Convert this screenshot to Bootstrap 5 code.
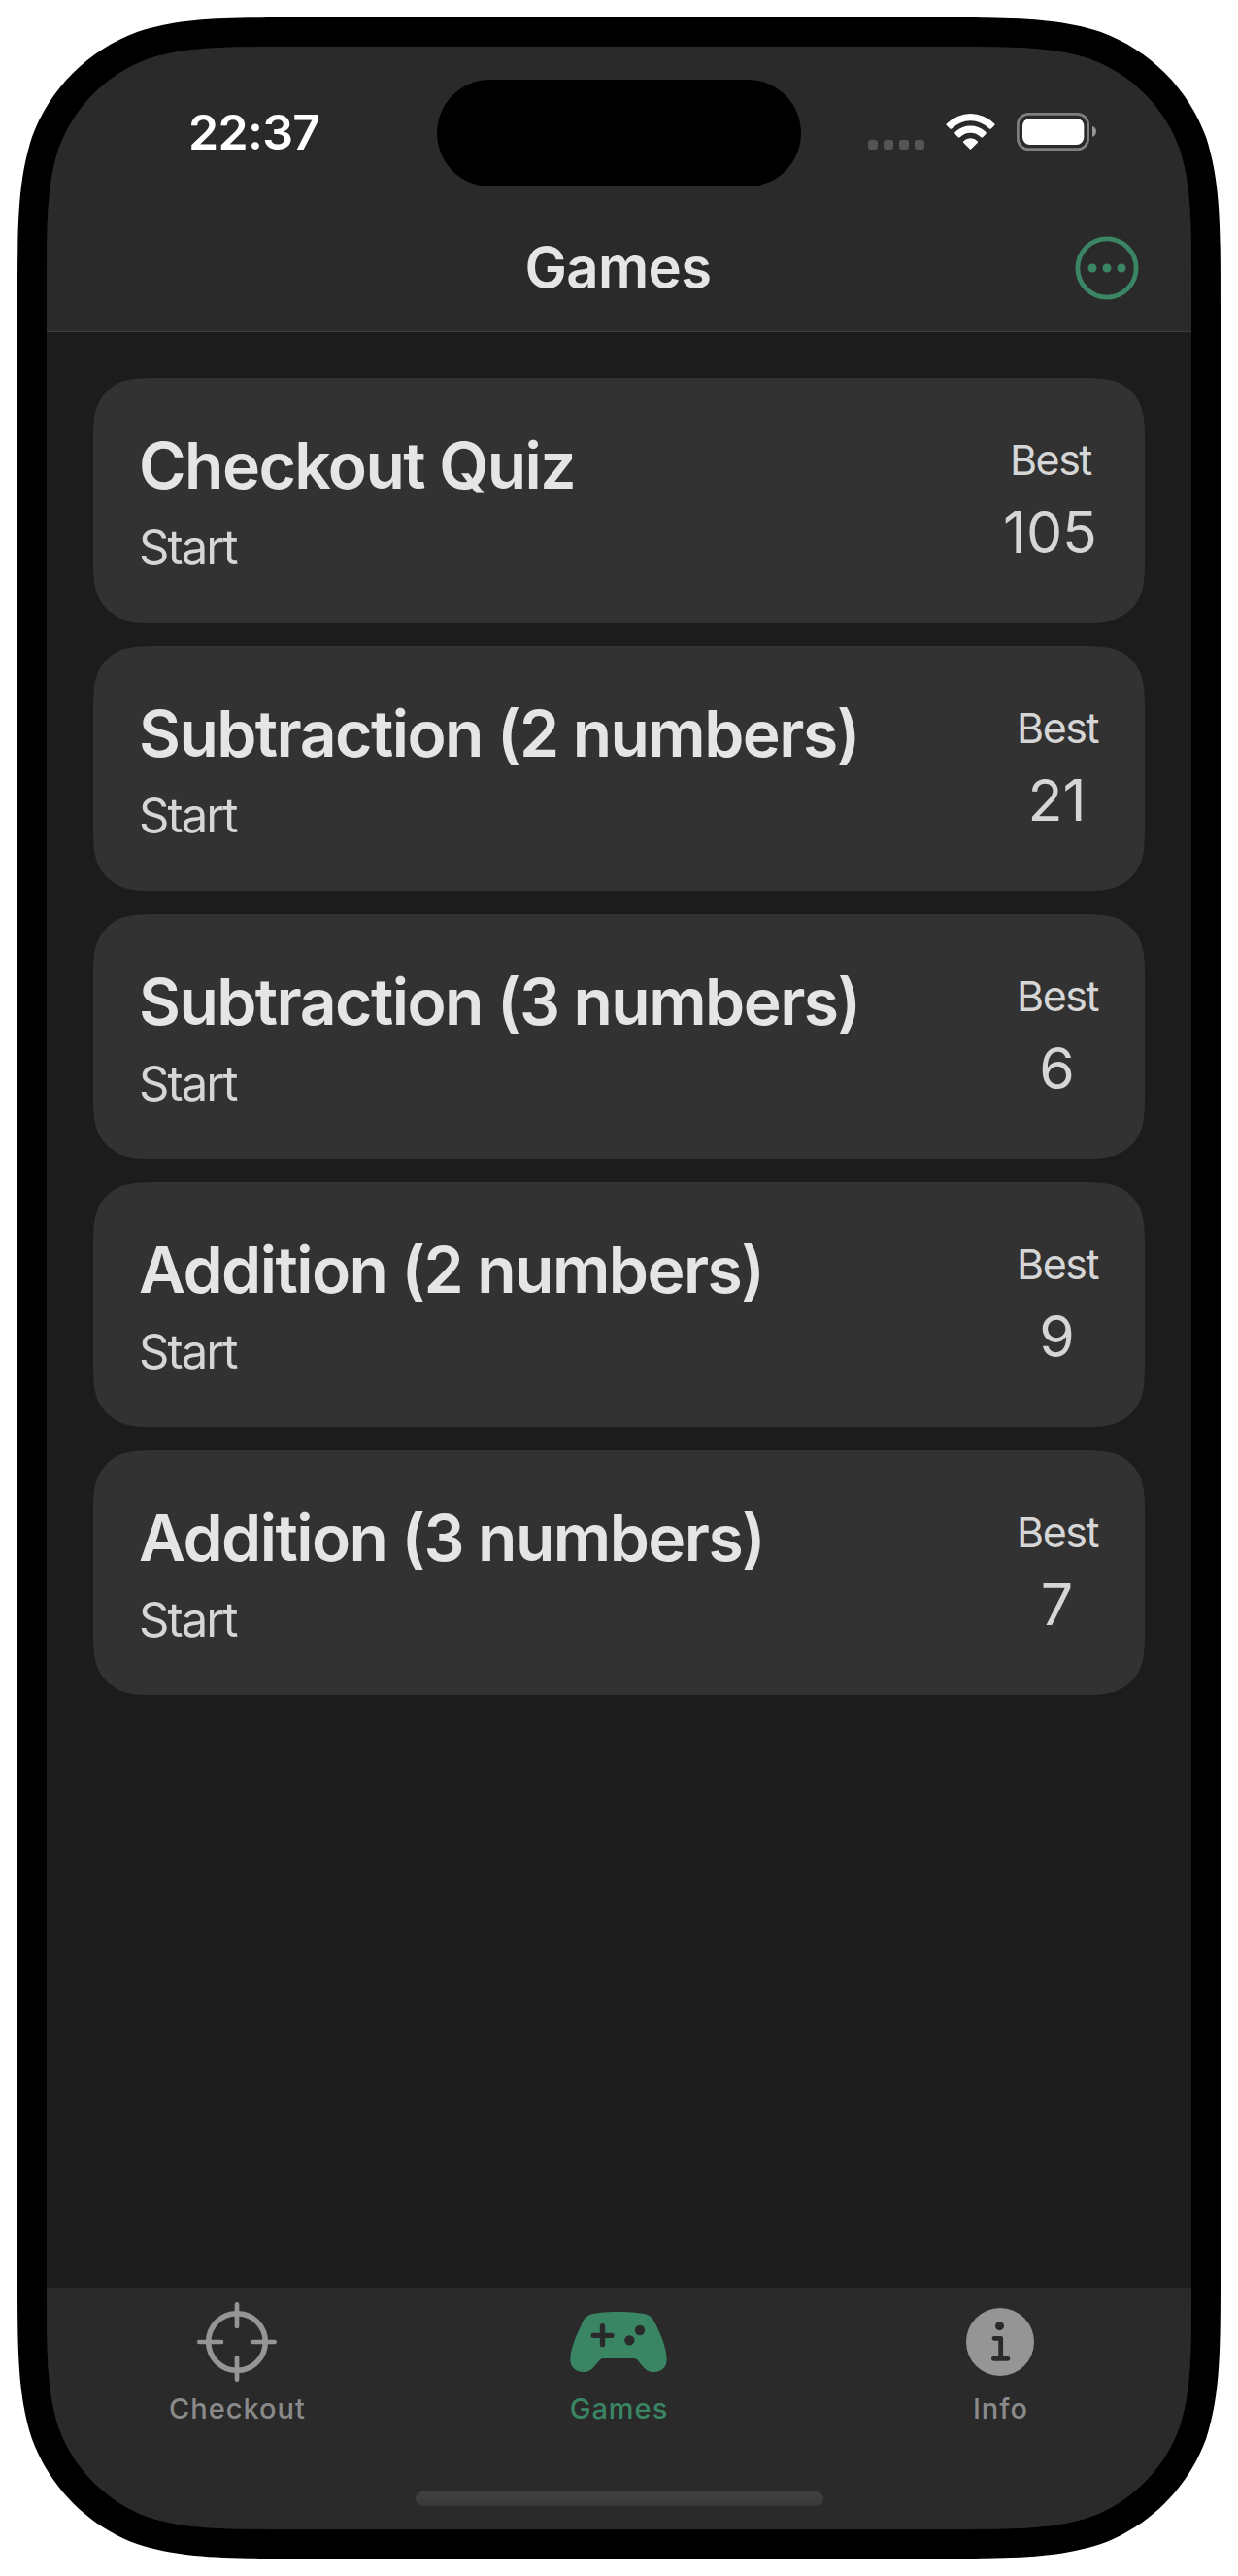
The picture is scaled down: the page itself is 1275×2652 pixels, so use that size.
<!DOCTYPE html>
<html lang="en">
<head>
<meta charset="utf-8">
<meta name="viewport" content="width=device-width, initial-scale=1">
<title>Games</title>
<link href="https://cdn.jsdelivr.net/npm/bootstrap@5.3.0/dist/css/bootstrap.min.css" rel="stylesheet">
<style>
  body { margin: 0; background: #fff; font-family: Inter, "Liberation Sans", sans-serif; color: #e5e5e5; }
  svg { display: block; flex: none; }
  .phone {
    width: 1239px; height: 2616px; margin: 18px; padding: 30px; background: #000;
    clip-path: path("M299.6 0H939.4c86.3 0 129.4 0 175.8 14.7c50.7 18.4 90.7 58.4 109.1 109.1c14.7 46.4 14.7 89.5 14.7 175.8V2316.4c0 86.3 0 129.4 -14.7 175.8c-18.4 50.7 -58.4 90.7 -109.1 109.1c-46.4 14.7 -89.5 14.7 -175.8 14.7H299.6c-86.3 0 -129.4 0 -175.8 -14.7c-50.7 -18.4 -90.7 -58.4 -109.1 -109.1c-14.7 -46.4 -14.7 -89.5 -14.7 -175.8V299.6c0 -86.3 0 -129.4 14.7 -175.8c18.4 -50.7 58.4 -90.7 109.1 -109.1c46.4 -14.7 89.5 -14.7 175.8 -14.7Z");
  }
  .phone-screen {
    height: 2556px; background: #1c1c1c;
    clip-path: path("M253.8 0H925.2c73.1 0 109.6 0 149 12.4c42.9 15.7 76.7 49.5 92.4 92.4c12.4 39.4 12.4 75.9 12.4 149V2302.2c0 73.1 0 109.6 -12.4 149c-15.7 42.9 -49.5 76.7 -92.4 92.4c-39.4 12.4 -75.9 12.4 -149 12.4H253.8c-73.1 0 -109.6 0 -149 -12.4c-42.9 -15.7 -76.7 -49.5 -92.4 -92.4c-12.4 -39.4 -12.4 -75.9 -12.4 -149V253.8c0 -73.1 0 -109.6 12.4 -149c15.7 -42.9 49.5 -76.7 92.4 -92.4c39.4 -12.4 75.9 -12.4 149 -12.4Z");
  }
  .top-area { height: 294px; background: #2a2a2a; border-bottom: 1px solid #3d3d3d; }
  .status-row { height: 175px; padding: 0 98px 0 146px; }
  .status-icons { gap: 22px; }
  .clock { font-size: 50px; font-weight: 600; line-height: 1; letter-spacing: -.7px; color: #fff; }
  .island { left: 402px; top: 34px; width: 375px; height: 110px; background: #000; }
  .title-row { height: 105px; padding: 0 54px; }
  .page-title { font-size: 58px; font-weight: 600; line-height: 1; letter-spacing: -.6px; margin: 0; padding-bottom: 2px; }
  .side-slot { width: 64px; }
  .tint { color: #3a8564; }
  .game-list { padding: 47px 48px; gap: 24px; }
  .game-card {
    height: 252px; background: #323232; padding: 50px 49px 0 47px;
    clip-path: path("M73.4 0H1009.6c21.2 0 31.7 0 43.1 3.6c12.4 4.5 22.2 14.3 26.7 26.7c3.6 11.4 3.6 21.9 3.6 43.1V178.6c0 21.2 0 31.7 -3.6 43.1c-4.5 12.4 -14.3 22.2 -26.7 26.7c-11.4 3.6 -21.9 3.6 -43.1 3.6H73.4c-21.2 0 -31.7 0 -43.1 -3.6c-12.4 -4.5 -22.2 -14.3 -26.7 -26.7c-3.6 -11.4 -3.6 -21.9 -3.6 -43.1V73.4c0 -21.2 0 -31.7 3.6 -43.1c4.5 -12.4 14.3 -22.2 26.7 -26.7c11.4 -3.6 21.9 -3.6 43.1 -3.6Z");
  }
  .game-name { font-size: 66px; font-weight: 600; line-height: 80px; letter-spacing: -1.55px; margin: 0 0 15px; }
  .game-start { font-size: 49px; line-height: 60px; letter-spacing: -2px; color: #d6d6d6; }
  .best-label { font-size: 43px; line-height: 52px; letter-spacing: -1.5px; margin: 8px -1px 14px 0; color: #d6d6d6; }
  .best-score { font-size: 59px; line-height: 70px; color: #d6d6d6; }
  .tab-area { height: 249px; background: #2a2a2a; padding-top: 14px; }
  .tab-item { color: #8a8a8a; font-size: 29px; font-weight: 500; line-height: 36px; letter-spacing: 1px; gap: 9px; padding-right: 1px; }
  .tab-item.tint { color: #3a8564; }
  .tab-item span { padding-left: 1px; }
  .tab-icon { height: 84px; }
  .home-bar { width: 420px; height: 15px; margin-top: 67px; background: linear-gradient(#404040, #393939); }
</style>
</head>
<body>
<div class="phone">
  <div class="phone-screen d-flex flex-column position-relative overflow-hidden">
    <header class="top-area">
      <div class="status-row d-flex justify-content-between align-items-center">
        <div class="clock">22:37</div>
        <div class="status-icons d-flex align-items-center">
          <svg width="58" height="39" viewBox="102 78 174 117" fill="#555"><rect x="102" y="162" width="30" height="30" rx="9"/><rect x="150" y="162" width="30" height="30" rx="9"/><rect x="198" y="162" width="30" height="30" rx="9"/><rect x="246" y="162" width="30" height="30" rx="9"/></svg>
          <svg width="51" height="39" viewBox="342 78 153 117" fill="#fff">
            <path d="M346 111A103 103 0 0 1 491 111Q496 114 492 118L483 127Q480 130 476 127A81 81 0 0 0 361 127Q357 130 354 127L345 118Q341 114 346 111Z"/>
            <path d="M373 136A69 69 0 0 1 464 136Q470 140 466 144L457 153Q454 156 450 153A45 45 0 0 0 387 153Q383 156 380 153L371 144Q367 140 373 136Z"/>
            <path d="M397 166A30 30 0 0 1 440 166Q443 168 440 171L421 190Q418.500 193 416 190L397 171Q394 168 397 166Z"/>
          </svg>
          <svg width="82" height="39" viewBox="561 78 246 117">
            <rect x="565" y="82" width="217" height="109" rx="33" fill="none" stroke="#808080" stroke-width="8"/>
            <rect x="579" y="96" width="190" height="81" rx="23" fill="#fff"/>
            <path d="M795 119Q807 124 807 136T795 153Z" fill="#959595"/>
          </svg>
        </div>
      </div>
      <div class="title-row d-flex align-items-center justify-content-between">
        <div class="side-slot"></div>
        <h1 class="page-title">Games</h1>
        <svg class="tint" width="66" height="66" viewBox="-33 -33 66 66"><circle r="30.100" fill="none" stroke="currentColor" stroke-width="4.800"/><g fill="currentColor"><circle cx="-15" r="4.500"/><circle r="4.500"/><circle cx="15" r="4.500"/></g></svg>
      </div>
    </header>
    <div class="island position-absolute rounded-pill"></div>

    <main class="game-list d-flex flex-column flex-grow-1">
      <section class="game-card d-flex justify-content-between">
        <div><h2 class="game-name">Checkout Quiz</h2><div class="game-start">Start</div></div>
        <div class="text-center"><div class="best-label">Best</div><div class="best-score">105</div></div>
      </section>
      <section class="game-card d-flex justify-content-between">
        <div><h2 class="game-name">Subtraction (2 numbers)</h2><div class="game-start">Start</div></div>
        <div class="text-center"><div class="best-label">Best</div><div class="best-score">21</div></div>
      </section>
      <section class="game-card d-flex justify-content-between">
        <div><h2 class="game-name">Subtraction (3 numbers)</h2><div class="game-start">Start</div></div>
        <div class="text-center"><div class="best-label">Best</div><div class="best-score">6</div></div>
      </section>
      <section class="game-card d-flex justify-content-between">
        <div><h2 class="game-name">Addition (2 numbers)</h2><div class="game-start">Start</div></div>
        <div class="text-center"><div class="best-label">Best</div><div class="best-score">9</div></div>
      </section>
      <section class="game-card d-flex justify-content-between">
        <div><h2 class="game-name">Addition (3 numbers)</h2><div class="game-start">Start</div></div>
        <div class="text-center"><div class="best-label">Best</div><div class="best-score">7</div></div>
      </section>
    </main>

    <nav class="tab-area d-flex flex-column align-items-center">
      <div class="row g-0 w-100">
        <div class="col tab-item d-flex flex-column align-items-center">
          <svg class="tab-icon" width="84" viewBox="-42 -42 84 84" fill="none" stroke="#959595"><circle r="29.300" stroke-width="5.600"/><path d="M0-38.700V-16M0 16V38.700M-38.700 0H-16M16 0H38.700" stroke-width="4.700" stroke-linecap="round"/></svg>
          <span>Checkout</span>
        </div>
        <div class="col tab-item tint d-flex flex-column align-items-center">
          <svg class="tab-icon" width="100" viewBox="109 87 300 252"><path fill="currentColor" d="M258 120C300 120 340 124 352 131C362 136 368 145 376 163C392 196 408 236 408 268C408 292 392 306 368 306C352 306 342 299 330 284L318 269Q314 264 309 264H210Q205 264 201 269L188 284C177 299 165 306 150 306C127 306 110 292 110 268C110 236 127 196 143 163C150 145 156 136 166 131C180 124 217 120 258 120Z"/><path d="M181.500 193H238M209.500 164V221" stroke="#2a2a2a" stroke-width="16" stroke-linecap="round"/><circle cx="325" cy="177" r="15.500" fill="#2a2a2a"/><circle cx="293" cy="208" r="15.500" fill="#2a2a2a"/></svg>
          <span>Games</span>
        </div>
        <div class="col tab-item d-flex flex-column align-items-center">
          <svg class="tab-icon" width="70" viewBox="105 87 210 252"><circle cx="210" cy="213" r="105" fill="#959595"/><circle cx="208.500" cy="164" r="13.500" fill="#2a2a2a"/><path d="M192 202H212V264M190 265H234" fill="none" stroke="#2a2a2a" stroke-width="14.500" stroke-linecap="round" stroke-linejoin="round"/></svg>
          <span>Info</span>
        </div>
      </div>
      <div class="home-bar rounded-pill"></div>
    </nav>
  </div>
</div>
<script src="https://cdn.jsdelivr.net/npm/bootstrap@5.3.0/dist/js/bootstrap.bundle.min.js"></script>
</body>
</html>
